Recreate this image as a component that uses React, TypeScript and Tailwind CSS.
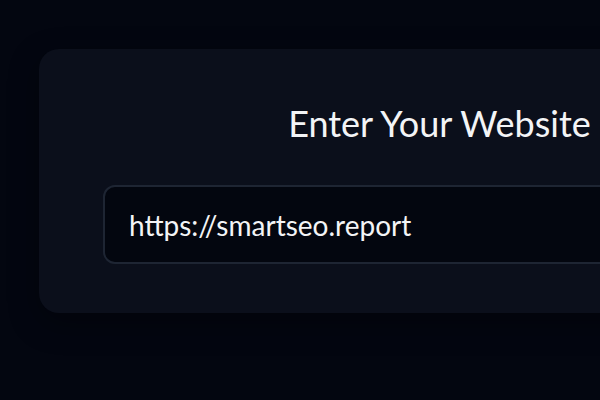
import React from "react";

export default function App() {
  return (
    <div
      className="w-[600px] h-[400px] overflow-hidden bg-[#030610]"
      style={{ fontFamily: "Lato, 'Noto Sans', sans-serif" }}
    >
      <div className="pt-[49px] pl-[39px]">
        <div className="w-[801px] rounded-[20px] bg-[#0b0f1b] shadow-[0_10px_30px_rgba(0,0,0,0.35)] pt-[53px] pb-[49px] px-[64px] flex flex-col items-center">
          <h1 className="text-[36px] leading-[43px] font-normal text-[#f3f4f6] whitespace-nowrap">
            Enter Your Website
          </h1>
          <div className="mt-[40px] w-full h-[79px] rounded-[12px] border-2 border-[#1e2533] bg-[#03060f] flex items-center px-[24px]">
            <span className="text-[28px] leading-[34px] text-[#f3f4f6] whitespace-nowrap">https://smartseo.report</span>
          </div>
        </div>
      </div>
    </div>
  );
}
